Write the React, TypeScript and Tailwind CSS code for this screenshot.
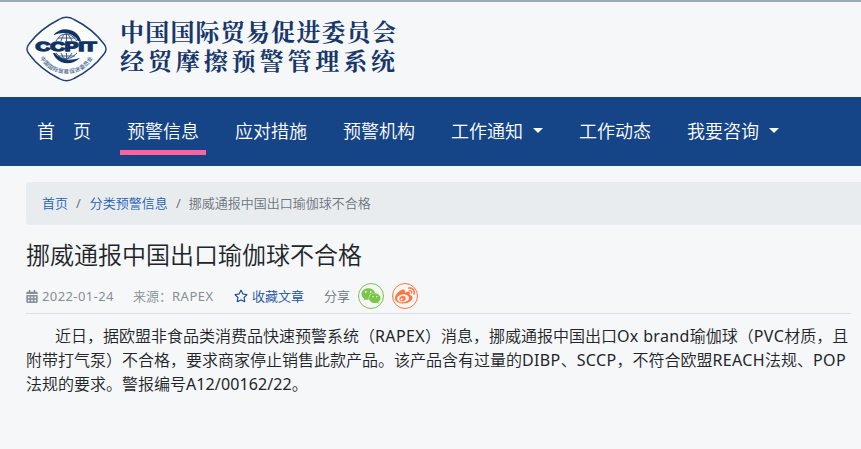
import { FaCalendarAlt, FaRegStar, FaWeibo, FaWeixin } from 'react-icons/fa'
import clsx from 'clsx'

interface NavItem {
  label: string
  active?: boolean
  dropdown?: boolean
}

const NAV_ITEMS: NavItem[] = [
  { label: '首　页' },
  { label: '预警信息', active: true },
  { label: '应对措施' },
  { label: '预警机构' },
  { label: '工作通知', dropdown: true },
  { label: '工作动态' },
  { label: '我要咨询', dropdown: true },
]

function Emblem() {
  return (
    <svg className="h-[66px] w-[81px] shrink-0" viewBox="0 0 81 66" fill="none">
      <path
        d="M33 3.5Q40.5 -1 48 3.5Q67 13 78 28Q82 33 78 38Q67 53 48 62.500Q40.500 67 33 62.500Q14 53 3 38Q-1 33 3 28Q14 13 33 3.500Z"
        fill="#fbfcfe"
        stroke="#1d3f72"
        strokeWidth="1.400"
      />
      {/* Globe */}
      <g stroke="#3c5a88" strokeWidth="1">
        <path d="M30 25Q34 18 40 18T51 25M35 25Q37 18 40 18T46 25M40.500 18V25M32 22H49" />
        <path d="M30 37Q34 43 40 43T51 37M35 37Q37 43 40 43T46 37M40.500 37V43M32 40H49" />
      </g>
      <path d="M27 19Q36 10 47 15Q53 18 55 25H52Q45 13 27 19Z" fill="#123464" />
      <path d="M54 42Q45 50 35 46Q29 43 27 37H29Q37 47 54 42Z" fill="#123464" />
      <text
        x="9.500"
        y="35.200"
        textLength="61"
        lengthAdjust="spacingAndGlyphs"
        fill="#123464"
        stroke="#123464"
        strokeWidth="1.300"
        className="font-['Liberation_Sans'] text-[12px] font-bold"
      >
        CCPIT
      </text>
      <path id="emblem-arc" d="M13 40Q22 57.500 40.500 57.500T68 40" />
      <text fill="#3c5a88" className="font-['Noto_Sans_CJK_SC',sans-serif] text-[5.500px] font-medium tracking-[0.400px]">
        <textPath href="#emblem-arc" startOffset="2">
          中国国际贸易促进委员会
        </textPath>
      </text>
    </svg>
  )
}

function Header() {
  return (
    <header className="flex h-[97px] items-start border-t-2 border-[#9aabb2] pl-[26px] pt-[14px]">
      <Emblem />
      <div className="ml-[13px] whitespace-nowrap font-['Noto_Serif_CJK_SC','Noto_Sans_CJK_SC',serif] text-[24px] leading-[29px] font-bold text-[#17376a]">
        <div className="tracking-[1.200px]">中国国际贸易促进委员会</div>
        <div className="tracking-[3.900px]">经贸摩擦预警管理系统</div>
      </div>
    </header>
  )
}

function Nav() {
  return (
    <nav className="flex h-[69px] items-start gap-[22px] bg-[#164587] pl-[30px] text-[18px] text-white">
      {NAV_ITEMS.map((item) => (
        <a
          key={item.label}
          className={clsx(
            'flex h-[58px] items-center border-b-[5px] px-[7px] pt-[16px] whitespace-nowrap',
            item.active ? 'border-[#ff629c]' : 'border-transparent'
          )}
        >
          <span className="leading-[27px]">{item.label}</span>
          {item.dropdown && (
            <span className="-mt-[2px] ml-[10px] border-x-[5.500px] border-t-[5.500px] border-x-transparent border-t-white" />
          )}
        </a>
      ))}
    </nav>
  )
}

function Breadcrumb() {
  return (
    <div className="flex h-[43px] items-center gap-2 rounded-l bg-[#e9ecef] pt-px pl-4 text-[13px] whitespace-nowrap text-[#6c757d]">
      <a className="text-[#1a5fb4]">首页</a>
      <span className="font-normal">/</span>
      <a className="ml-px text-[#1a5fb4]">分类预警信息</a>
      <span className="font-normal">/</span>
      <span>挪威通报中国出口瑜伽球不合格</span>
    </div>
  )
}

function Meta() {
  return (
    <div className="mr-[10px] flex h-[36px] items-center border-b border-[#dcdfe2] text-[13px] whitespace-nowrap text-[#868e96]">
      <FaCalendarAlt className="mt-px h-[13px] w-[12px]" />
      <span className="mt-[2px] ml-1 w-[91px] font-normal tracking-[0.400px]">2022-01-24</span>
      <span className="mt-[2px]">来源：</span>
      <span className="mt-[2px] w-[62px] font-normal tracking-[0.500px]">RAPEX</span>
      <FaRegStar className="mt-px h-[14px] w-[14px] text-[#164fa0]" />
      <a className="mt-[2px] ml-1 text-[#164fa0]">收藏文章</a>
      <span className="mt-[2px] ml-[20px] text-[#6c757d]">分享</span>
      <span className="ml-[8px] grid size-[26px] place-items-center rounded-full border border-[#7bc549]">
        <FaWeixin className="size-[20px] text-[#7bc549]" />
      </span>
      <span className="ml-[8px] grid size-[26px] place-items-center rounded-full border border-[#ff763b]">
        <FaWeibo className="size-[20px] text-[#ff763b]" />
      </span>
    </div>
  )
}

function Latin({ children }: { children: string }) {
  return <span className="font-normal tracking-[0.360px]">{children}</span>
}

export default function App() {
  return (
    <div
      lang="zh-CN"
      className="h-[449px] w-[861px] overflow-hidden bg-[#f6f7f9] font-['Noto_Sans','Noto_Sans_CJK_SC',sans-serif] font-[350]"
    >
      <Header />
      <Nav />
      <main className="pt-4 pl-[26px]">
        <Breadcrumb />
        <h1 className="mt-[12px] text-[24px] leading-[36px] font-[350] text-[#212529]">
          挪威通报中国出口瑜伽球不合格
        </h1>
        <div className="mt-[5px]">
          <Meta />
        </div>
        <div className="mt-[10px] text-[16px] leading-6 whitespace-nowrap text-[#212529]">
          <p className="pl-[29px]">
            近日，据欧盟非食品类消费品快速预警系统（<Latin>RAPEX</Latin>）消息，挪威通报中国出口
            <Latin>Ox brand</Latin>瑜伽球（<Latin>PVC</Latin>材质，且
          </p>
          <p>
            附带打气泵）不合格，要求商家停止销售此款产品。该产品含有过量的<Latin>DIBP</Latin>、
            <Latin>SCCP</Latin>，不符合欧盟<Latin>REACH</Latin>法规、<Latin>POP</Latin>
          </p>
          <p>
            法规的要求。警报编号<span className="font-normal tracking-[0.100px]">A12/00162/22</span>。
          </p>
        </div>
      </main>
    </div>
  )
}
